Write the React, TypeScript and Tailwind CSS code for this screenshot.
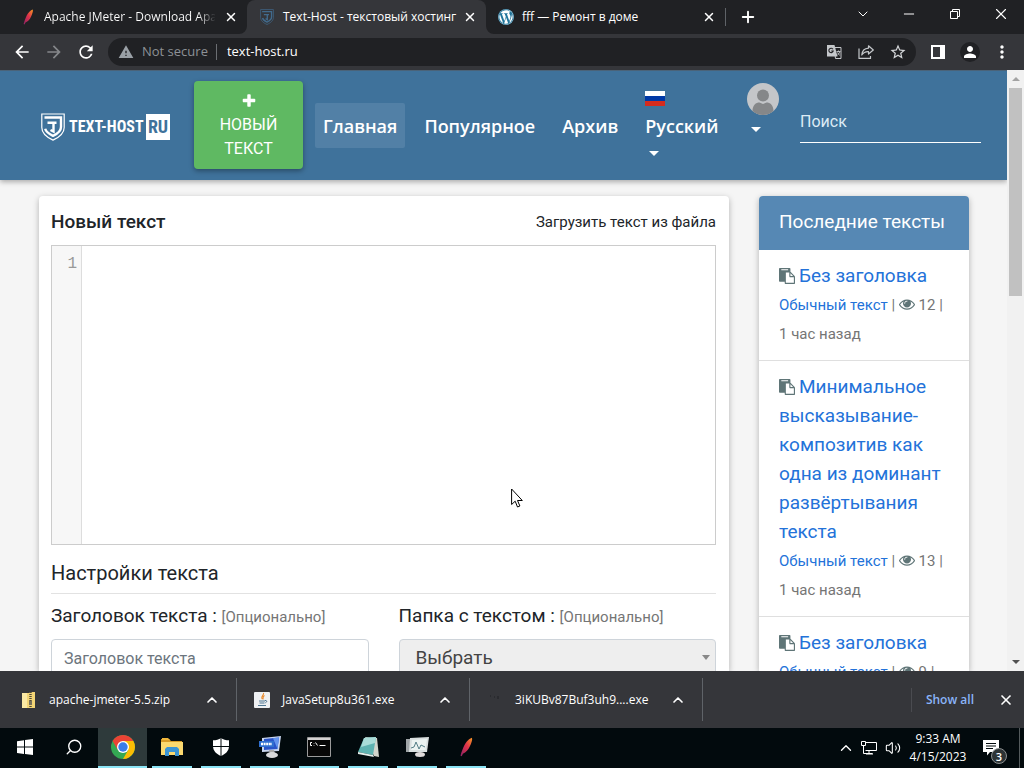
import React from "react";
import { MdArrowBack, MdArrowForward, MdRefresh, MdWarning, MdStarBorder, MdPerson, MdMoreVert } from "react-icons/md";
import { FaWordpress } from "react-icons/fa";
import { ChevronDown, ChevronUp, Plus, X, Minus, Search, Volume2 } from "lucide-react";

const uiFont = "font-['Open_Sans','Noto_Sans',sans-serif]";

function Feather({ className }: { className?: string }) {
  return (
    <svg viewBox="0 0 16 16" className={className} aria-hidden="true">
      <defs>
        <linearGradient id="feather" x1="1" y1="0" x2="0" y2="1">
          <stop offset="0" stopColor="#f69923" />
          <stop offset="0.45" stopColor="#e0324a" />
          <stop offset="1" stopColor="#8a2466" />
        </linearGradient>
      </defs>
      <path d="M12.8.5c-2.2.6-4.700 3.200-6.100 6C5.400 9.200 4.300 12 3.600 15l1 .4.9-2c2.500-.8 4.400-3.400 5.600-6 1.200-2.700 2.200-5.200 1.700-6.900z" fill="url(#feather)" />
    </svg>
  );
}

function ShieldMark({ className, color }: { className?: string; color: string }) {
  return (
    <svg viewBox="0 0 24 28" className={className} fill="none" stroke={color} aria-hidden="true">
      <path d="M.8 1h22.400v13.500c0 6-5 9.800-11.200 12.600C5.800 24.300.8 20.500.8 14.500z" strokeWidth="1.2" />
      <path d="M3.500 4.500h16.500v9.500c0 4.500-4 7-8 8.800-3.500-1.600-7-3.800-7.800-7" strokeWidth="2.4" />
      <path d="M6.500 9.800h9M12.500 9.800v8.700l-3-1.500" strokeWidth="2.4" />
    </svg>
  );
}

function Foot({ flip }: { flip?: boolean }) {
  return (
    <svg viewBox="0 0 8 8" className={flip ? "absolute -right-2 bottom-0 size-2" : "absolute -left-2 bottom-0 size-2"} aria-hidden="true">
      <path d={flip ? "M0 0a8 8 0 0 0 8 8H0z" : "M8 0a8 8 0 0 1-8 8h8z"} fill="#35363a" />
    </svg>
  );
}

function Tab({ title, icon, active, fade }: { title: string; icon: React.ReactNode; active?: boolean; fade?: boolean }) {
  return (
    <div className={active ? "relative flex w-[239px] items-center gap-2 rounded-t-lg bg-[#35363a] pr-2 pl-3" : "flex w-[239px] items-center gap-2 pr-2 pl-3"}>
      {active && <Foot />}
      {active && <Foot flip />}
      {icon}
      <span className={fade ? "min-w-0 flex-1 overflow-hidden bg-linear-to-r from-white from-90% to-[#303134] bg-clip-text text-xs whitespace-nowrap text-transparent" : "min-w-0 flex-1 text-xs whitespace-nowrap"}>
        {title}
      </span>
      <button aria-label="Close tab" className="flex size-4 items-center justify-center">
        <X className="size-3.5" strokeWidth={2.5} />
      </button>
    </div>
  );
}

function Browser() {
  return (
    <header className={`${uiFont} shrink-0 text-white`}>
      <div className="flex h-[34px] bg-[#202124] pl-2">
        <Tab title="Apache JMeter - Download Apache JMeter" fade icon={<Feather className="size-4 shrink-0" />} />
        <Tab title="Text-Host - текстовый хостинг" active icon={<ShieldMark className="size-4 shrink-0" color="#416a8c" />} />
        <Tab
          title="fff — Ремонт в доме"
          icon={<FaWordpress className="size-4 shrink-0 rounded-full bg-[#21759b] text-white" />}
        />
        <div className="my-2 w-px bg-[#5f6368]" />
        <button aria-label="New tab" className="flex w-11 items-center justify-center">
          <Plus className="size-[18px]" strokeWidth={2.5} />
        </button>
        <div className="ml-auto flex h-7">
          <button aria-label="Search tabs" className="flex w-[46px] items-center justify-center"><ChevronDown className="size-4" strokeWidth={1.5} /></button>
          <button aria-label="Minimize" className="flex w-[46px] items-center justify-center"><Minus className="size-4" strokeWidth={1.5} /></button>
          <button aria-label="Restore" className="flex w-[46px] items-center justify-center">
            <svg viewBox="0 0 10 10" className="size-2.5" fill="none" stroke="#fff" aria-hidden="true">
              <path d="M.5 2.500h7v7h-7zM2.500 2.500v-2h7v7h-2" />
            </svg>
          </button>
          <button aria-label="Close" className="flex w-[46px] items-center justify-center"><X className="size-[18px]" strokeWidth={1.5} /></button>
        </div>
      </div>
      <div className="flex h-9 items-center bg-[#35363a] px-1.5">
        <div className="flex">
          <button aria-label="Back" className="flex w-8 justify-center"><MdArrowBack className="size-5" /></button>
          <button aria-label="Forward" className="flex w-8 justify-center text-[#85878a]"><MdArrowForward className="size-5" /></button>
          <button aria-label="Reload" className="flex w-8 justify-center"><MdRefresh className="size-5" /></button>
        </div>
        <div className="ml-1.5 flex h-7 flex-1 items-center rounded-full bg-[#202124] pr-0.5 pl-2.5 text-[13px]">
          <MdWarning className="size-4 text-[#9aa0a6]" />
          <span className="ml-2 text-[#8d9196]">Not secure</span>
          <span className="mr-2.5 ml-2 h-4 w-px bg-[#6b6e72]" />
          <span className="flex-1">text-host.ru</span>
          <button aria-label="Translate this page" className="flex w-8 justify-center text-[#c4c7ca]">
            <svg viewBox="0 0 16 16" className="size-4" aria-hidden="true">
              <path d="M8 3.500h7v11H9.500z" fill="none" stroke="currentColor" />
              <path d="M1 1h7.500l3 11.500H1z" fill="currentColor" />
              <path d="M7 5.300A2.200 2.200 0 1 0 7.200 7H5.200" fill="none" stroke="#202124" strokeWidth="1.1" />
              <path d="M10.500 7.500h4M12.500 6.500v1M13.800 7.500c-.5 1.500-1.200 2.800-2.300 3.800M11.500 8.500c.7 1.200 1.200 2 2.300 2.800" fill="none" stroke="currentColor" strokeWidth=".9" />
            </svg>
          </button>
          <button aria-label="Share this page" className="flex w-8 justify-center text-[#c4c7ca]">
            <svg viewBox="0 0 16 16" className="size-4" fill="none" stroke="currentColor" strokeWidth="1.2" strokeLinejoin="round" aria-hidden="true">
              <path d="M1 4.500v9.900h11.500V12" />
              <path d="M10.500 1.800 15.300 6l-4.800 4V7.700C7.500 7.500 5.500 8.500 3.800 11c.3-4 2.700-6.600 6.700-6.900z" />
            </svg>
          </button>
          <button aria-label="Bookmark this tab" className="flex w-8 justify-center text-[#d5d7da]"><MdStarBorder className="size-[18px]" /></button>
        </div>
        <div className="flex items-center pl-1.5">
          <button aria-label="Side panel" className="flex w-8 justify-center">
            <svg viewBox="0 0 14 14" className="size-3.5" aria-hidden="true">
              <path d="M1 1h12v12H1z" fill="none" stroke="#fff" strokeWidth="2" />
              <path d="M9 1h4v12H9z" fill="#fff" />
            </svg>
          </button>
          <button aria-label="Profile" className="flex w-8 justify-center">
            <span className="flex size-5 items-center justify-center rounded-full bg-[#202124]"><MdPerson className="size-[18px]" /></span>
          </button>
          <button aria-label="Menu" className="flex w-8 justify-center"><MdMoreVert className="size-5" /></button>
        </div>
      </div>
    </header>
  );
}

function Caret() {
  return (
    <svg viewBox="0 0 10 5" className="h-[5px] w-2.5" aria-hidden="true">
      <path d="M0 0h10L5 5z" fill="currentColor" />
    </svg>
  );
}

function SiteHeader() {
  return (
    <header className="relative z-10 flex h-[110px] shrink-0 items-center bg-[#3f729b] pr-[26px] pl-[41px] text-white shadow-[0_2px_5px_rgba(0,0,0,0.3),inset_0_1px_0_#4a6379]">
      <a href="#home" aria-label="TEXT-HOST.RU" className="flex w-[129px] items-center gap-1 pt-1">
        <ShieldMark className="h-7 w-6 shrink-0" color="#fff" />
        <span className="flex flex-1 items-center justify-between font-['Roboto_Condensed','Liberation_Sans_Narrow','Roboto',sans-serif] text-base leading-none font-bold whitespace-nowrap">
          <span>TEXT-HOST</span>
          <span className="flex h-[26px] w-6 items-center justify-center bg-white text-lg leading-none text-[#3f729b]">RU</span>
        </span>
      </a>
      <a href="#new" className="ml-6 flex h-[88px] w-[109px] flex-col items-center rounded-sm bg-[#5fb962] pt-2 text-center text-base leading-6 shadow-[0_2px_5px_rgba(0,0,0,0.35)]">
        <svg viewBox="0 0 1792 1792" className="my-1 size-4" fill="currentColor" aria-hidden="true">
          <path d="M1600 736v192q0 40-28 68t-68 28h-416v416q0 40-28 68t-68 28h-192q-40 0-68-28t-28-68v-416h-416q-40 0-68-28t-28-68v-192q0-40 28-68t68-28h416v-416q0-40 28-68t68-28h192q40 0 68 28t28 68v416h416q40 0 68 28t28 68z" />
        </svg>
        <span>НОВЫЙ<br />ТЕКСТ</span>
      </a>
      <nav className="ml-3 flex items-center gap-[11px] font-['Open_Sans','Noto_Sans',sans-serif] text-lg leading-[29px] font-semibold">
        <a href="#home" className="rounded-xs bg-[#5280a6] px-2 pt-[9px] pb-[7px]">Главная</a>
        <a href="#popular" className="px-2 pt-[9px] pb-[7px]">Популярное</a>
        <a href="#archive" className="px-2 pt-[9px] pb-[7px]">Архив</a>
        <button className="flex flex-col items-start px-2 pb-1 text-left">
          <svg viewBox="0 0 20 15" className="mb-1.5 h-[15px] w-5" aria-hidden="true">
            <path d="M0 0h20v5H0z" fill="#fff" />
            <path d="M0 5h20v5H0z" fill="#0039a6" />
            <path d="M0 10h20v5H0z" fill="#d52b1e" />
          </svg>
          <span>Русский</span>
          <span className="mt-2.5 ml-1 flex"><Caret /></span>
        </button>
      </nav>
      <button aria-label="Аккаунт" className="ml-5 flex flex-col items-start gap-3 pb-9">
        <svg viewBox="0 0 32 32" className="size-8" aria-hidden="true">
          <circle cx="16" cy="16" r="16" fill="#c4c6c9" />
          <circle cx="16" cy="12.5" r="6" fill="#858789" />
          <path d="M5.500 28c0-6 3.500-8.500 7-8.500l3.500 1.500 3.500-1.500c3.500 0 7 2.500 7 8.500a16 16 0 0 1-21 0z" fill="#858789" />
        </svg>
        <span className="ml-1 flex"><Caret /></span>
      </button>
      <input
        type="search"
        aria-label="Поиск"
        placeholder="Поиск"
        className="ml-auto h-9 w-[181px] rounded-none border-b border-white bg-transparent pb-1.5 text-base outline-none placeholder:text-[#dcebf5]"
      />
    </header>
  );
}

function Field({ id, label, children }: { id: string; label: string; children: React.ReactNode }) {
  return (
    <div className="min-w-0 flex-1">
      <label htmlFor={id} className="mb-2 block text-[19px] leading-7 whitespace-nowrap">
        {label} : <span className="text-[15px] text-[#757575]">[Опционально]</span>
      </label>
      {children}
    </div>
  );
}

function Editor() {
  return (
    <main className="min-w-0 flex-1 rounded-t-sm bg-white pt-3 pr-[13px] pl-3 shadow-[0_2px_6px_rgba(0,0,0,0.28)]">
      <div className="mb-2 flex h-[29px] items-center justify-between">
        <h1 className="text-[19px] font-medium">Новый текст</h1>
        <a href="#upload" className="text-[15px]">Загрузить текст из файла</a>
      </div>
      <div className="flex h-[300px] border border-[#ccc]">
        <div className="w-[30px] border-r border-[#ddd] bg-[#f7f7f7] pt-1 pr-1 text-right font-['Liberation_Mono',monospace] text-base leading-7 text-[#999]">1</div>
        <textarea aria-label="Новый текст" className="min-w-0 flex-1 resize-none p-1 font-['Liberation_Mono',monospace] outline-none" />
      </div>
      <h2 className="mt-3.5 text-xl leading-7">Настройки текста</h2>
      <hr className="mt-1.5 mb-2 border-[#e2e2e2]" />
      <div className="flex gap-[30px]">
        <Field id="title" label="Заголовок текста">
          <input id="title" placeholder="Заголовок текста" className="h-[38px] w-full rounded-sm border border-[#ced4da] px-3 text-base outline-none placeholder:text-[#6c757d]" />
        </Field>
        <Field id="folder" label="Папка с текстом">
          <div className="relative">
            <select id="folder" className="h-[38px] w-full appearance-none rounded-sm border border-[#ced4da] bg-[#eee] px-4 text-[19px] text-[#444]">
              <option>Выбрать</option>
            </select>
            <svg viewBox="0 0 8 5" className="pointer-events-none absolute top-4 right-1.5 h-[5px] w-2" aria-hidden="true">
              <path d="M0 0h8L4 5z" fill="#888" />
            </svg>
          </div>
        </Field>
      </div>
    </main>
  );
}

const recent = [
  { title: "Без заголовка", views: 12 },
  { title: "Минимальное высказывание-композитив как одна из доминант развёртывания текста", views: 13 },
  { title: "Без заголовка", views: 9 },
];

function Recent() {
  return (
    <aside className="w-[210px] shrink-0 rounded-t-sm bg-white shadow-[0_2px_6px_rgba(0,0,0,0.28)]">
      <h2 className="flex h-[54px] items-center rounded-t-sm bg-[#5688b4] px-5 pb-0.5 text-[19px] text-white">Последние тексты</h2>
      <ul>
        {recent.map((item) => (
          <li key={item.views} className="border-b border-[#dfdfdf] px-5 py-[11px] leading-[29px]">
            <a href="#text" className="block text-[19px] text-[#2372d9]">
              <svg viewBox="0 0 1792 1792" className="mr-1 mb-0.5 inline size-4 text-[#5f7577]" fill="currentColor" aria-hidden="true">
                <path d="M768 1664h896v-640h-416q-40 0-68-28t-28-68v-416h-384v1152zm256-1440v-64q0-13-9.5-22.500t-22.500-9.500h-704q-13 0-22.500 9.500t-9.500 22.500v64q0 13 9.500 22.500t22.500 9.500h704q13 0 22.500-9.500t9.500-22.500zm256 672h299l-299-299v299zm512 128v672q0 40-28 68t-68 28h-960q-40 0-68-28t-28-68v-160h-544q-40 0-68-28t-28-68v-1344q0-40 28-68t68-28h1088q40 0 68 28t28 68v328q21 13 36 28l408 408q28 28 48 76t20 88z" />
              </svg>
              {item.title}
            </a>
            <p className="pt-px text-[15px] text-[#757575]">
              <a href="#plain" className="text-[#2372d9]">Обычный текст</a> |{" "}
              <svg viewBox="0 0 1792 1792" className="mb-1 inline size-4 text-[#5f7577]" fill="currentColor" aria-hidden="true">
                <path d="M1664 960q-152-236-381-353 61 104 61 225 0 185-131.500 316.500t-316.500 131.500-316.500-131.500-131.500-316.500q0-121 61-225-229 117-381 353 133 205 333.500 326.500t434.500 121.500 434.500-121.500 333.500-326.500zm-720-384q0-20-14-34t-34-14q-125 0-214.500 89.500t-89.500 214.500q0 20 14 34t34 14 34-14 14-34q0-86 61-147t147-61q20 0 34-14t14-34zm848 384q0 34-20 69-140 230-376.500 368.500t-499.500 138.500-499.500-139-376.500-368q-20-35-20-69t20-69q140-229 376.500-368t499.500-139 499.500 139 376.500 368q20 35 20 69z" />
              </svg>{" "}
              {item.views} | <br />1 час назад
            </p>
          </li>
        ))}
      </ul>
    </aside>
  );
}

function Scrollbar() {
  return (
    <div className="flex w-[17px] shrink-0 flex-col items-center bg-[#f1f1f1]" aria-hidden="true">
      <svg viewBox="0 0 8 4" className="my-[7px] h-1 w-2"><path d="M0 4h8L4 0z" fill="#a3a3a3" /></svg>
      <div className="h-[208px] w-[13px] bg-[#c1c1c1]" />
      <svg viewBox="0 0 8 4" className="mt-auto mb-[7px] h-1 w-2"><path d="M0 0h8L4 4z" fill="#505050" /></svg>
    </div>
  );
}

function Download({ name, icon }: { name: string; icon: React.ReactNode }) {
  return (
    <div className="my-[7px] flex w-[233px] items-center border-r border-[#5f6368] pr-4 pl-[17px] text-xs">
      <span className="mr-3 flex size-4 shrink-0 items-center justify-center">{icon}</span>
      <button className="flex-1 text-left whitespace-nowrap">{name}</button>
      <button aria-label="Download options"><ChevronUp className="size-4" strokeWidth={2.5} /></button>
    </div>
  );
}

function Downloads() {
  return (
    <section aria-label="Downloads" className={`${uiFont} flex h-[57px] shrink-0 bg-[#35363a] pl-1 text-white`}>
      <Download
        name="apache-jmeter-5.5.zip"
        icon={
          <svg viewBox="0 0 16 16" className="size-4" aria-hidden="true">
            <path d="M1 1h7l1-1h5v16H1z" fill="#f2d475" />
            <path d="M1 1h5v15H1z" fill="#fbe9a4" />
            <path d="M9.500 0v16" stroke="#4f4937" strokeWidth="2.4" strokeDasharray="1 1" />
            <path d="M8 9h3v4H8z" fill="#77705a" />
          </svg>
        }
      />
      <Download
        name="JavaSetup8u361.exe"
        icon={
          <svg viewBox="0 0 16 16" className="size-4" aria-hidden="true">
            <rect width="16" height="16" rx="1" fill="#eef0f2" />
            <path d="M9.500 1c1 2-3 3-1.500 6M10.500 3.500C8 5 9.800 5.500 8.800 7.500" stroke="#e8892b" fill="none" strokeWidth="1.1" />
            <path d="M5 9h6M5.500 11h5M4 13.500h8M11 8.500c2.500-.5 2 2 .3 2.300" stroke="#4d7590" fill="none" />
          </svg>
        }
      />
      <Download
        name="3iKUBv87Buf3uh9....exe"
        icon={<svg viewBox="0 0 16 16" className="size-4" aria-hidden="true"><path d="M3 4h1M7 5h1M11 4v3" stroke="#202124" /></svg>}
      />
      <div className="ml-auto flex items-center">
        <span className="h-6 w-px bg-[#4a4b50]" />
        <button className="px-3.5 text-xs font-semibold text-[#8ab4f8]">Show all</button>
        <button aria-label="Close downloads bar" className="mr-2.5 ml-2.5"><X className="size-4" strokeWidth={2.5} /></button>
      </div>
    </section>
  );
}

function Tile({ label, active, running, children }: { label: string; active?: boolean; running?: boolean; children: React.ReactNode }) {
  return (
    <button aria-label={label} className={active ? "flex w-[49px] flex-col items-center bg-[#2e3a3b]" : "flex w-[49px] flex-col items-center"}>
      <span className="flex h-[38px] items-center">{children}</span>
      {(active || running) && <span className={active ? "h-0.5 w-full bg-[#8be4f5]" : "h-0.5 w-10 bg-[#8be4f5]"} />}
    </button>
  );
}

function Taskbar() {
  return (
    <footer className={`${uiFont} flex h-10 shrink-0 bg-[#020a0d] text-xs text-white`}>
      <Tile label="Start">
        <svg viewBox="0 0 16 16" className="size-4" fill="#fff" aria-hidden="true"><path d="M0 2.200 7 1.200v6.400H0zM8 1l8-1v7.600H8zM0 8.500h7v6.400l-7-1zM8 8.500h8V16l-8-1z" /></svg>
      </Tile>
      <Tile label="Search"><Search className="size-[18px] -scale-x-100" strokeWidth={1.8} /></Tile>
      <Tile label="Google Chrome" active>
        <svg viewBox="0 0 24 24" className="size-6" aria-hidden="true">
          <circle cx="12" cy="12" r="12" fill="#34a853" />
          <path d="M1.610 6A12 12 0 0 1 22.390 6H12L6.800 15z" fill="#ea4335" />
          <path d="M22.390 6A12 12 0 0 1 12 24l5.200-9L12 6z" fill="#fbbc04" />
          <circle cx="12" cy="12" r="6" fill="#fff" />
          <circle cx="12" cy="12" r="4.7" fill="#3b7de9" />
        </svg>
      </Tile>
      <Tile label="File Explorer" running>
        <svg viewBox="0 0 22 20" className="h-5 w-[22px]" aria-hidden="true">
          <path d="M0 2h8l2 2h11v14H0z" fill="#d79b27" />
          <path d="M1 1h6l2 2H1z" fill="#f1b83c" />
          <path d="M0 5h22v13H0z" fill="#fbd96f" />
          <path d="M4 19v-7l2-2h10l2 2v7h-4v-4H8v4z" fill="#3c95d4" />
        </svg>
      </Tile>
      <Tile label="Windows Security" running>
        <svg viewBox="0 0 16 18" className="h-[18px] w-4" aria-hidden="true">
          <path d="M8 0c2 1.600 5 2.300 8 2.300V8c0 5-3.500 8-8 10C3.500 16 0 13 0 8V2.300C3 2.300 6 1.600 8 0z" fill="#fff" />
          <path d="M8 0v18M0 8.500h16" stroke="#020a0d" />
        </svg>
      </Tile>
      <Tile label="Remote installer" running>
        <svg viewBox="0 0 24 24" className="size-6" aria-hidden="true">
          <path d="m4 3 19-2-2 15-17 1z" fill="#c9d6ef" />
          <path d="m6 4 15-1.500L19.500 14 6 15z" fill="#2a54c8" />
          <path d="m15 3.200 6-.7L19.500 14z" fill="#6494ed" />
          <path d="M1 6h15v6H1z" fill="#2f6fd0" />
          <path d="M3 9h11" stroke="#fff" strokeWidth="2.5" strokeDasharray="2 .6" />
          <path d="M11 15h5l1 4h-5z" fill="#aaa" />
          <ellipse cx="14" cy="20" rx="6" ry="3" fill="#d9dadc" />
        </svg>
      </Tile>
      <Tile label="Command Prompt" running>
        <svg viewBox="0 0 24 20" className="h-5 w-6" aria-hidden="true">
          <path d="M.5.500h23v19H.5z" fill="#070707" stroke="#9b9b9b" />
          <path d="M1 1h22v2H1z" fill="#d3d3d3" />
          <path d="M5 5.500H3.500v3H5M7 6v.5M7 8v.5M8.500 5.500l2 3M12.500 8.500h6" stroke="#fff" fill="none" />
        </svg>
      </Tile>
      <Tile label="Notepad" running>
        <svg viewBox="0 0 24 24" className="size-6" aria-hidden="true">
          <path d="m9 2 12 1 2 19-5-1z" fill="#d2d5cc" />
          <path d="M8 3 20 2l-3 18-15-3z" fill="#5fb3b1" />
          <path d="M8 3 20 2l-1 6L5 12z" fill="#a9dcd8" />
          <path d="m2 17 15 3 1 2-16-3z" fill="#e5f0ed" />
        </svg>
      </Tile>
      <Tile label="Resource Monitor" running>
        <svg viewBox="0 0 24 24" className="size-6" aria-hidden="true">
          <path d="M1 4h14v13H1z" fill="#9fa5a7" />
          <path d="m5 3 19-1-2 15H4z" fill="#d9dfdf" />
          <path d="m7 5 15-1-1.500 11H6z" fill="#ecf4f2" />
          <path d="m6 13 3-1 2-5 3 7 2-4 4 2" fill="none" stroke="#557f87" />
          <ellipse cx="15" cy="19.5" rx="5" ry="2.5" fill="#dedada" />
        </svg>
      </Tile>
      <Tile label="Apache JMeter" running><Feather className="size-5" /></Tile>

      <div className="ml-auto flex items-center">
        <button aria-label="Show hidden icons"><ChevronUp className="size-[18px]" strokeWidth={1.8} /></button>
        <svg viewBox="0 0 16 14" className="ml-1.5 h-3.5 w-4" fill="none" stroke="#fff" aria-hidden="true">
          <path d="M4.500 1.500h11v8h-11M.5.500h4v4h-4zM2.500 4.500v8h9M8 9.500v3M5 13h7" />
        </svg>
        <Volume2 className="ml-2 size-4" strokeWidth={1.6} />
        <div className="ml-2 w-[58px] text-center leading-[18px] whitespace-nowrap">
          <div>9:33 AM</div>
          <div>4/15/2023</div>
        </div>
        <button aria-label="Notifications" className="relative mr-5 ml-4">
          <svg viewBox="0 0 16 16" className="size-4" aria-hidden="true">
            <path d="M0 0h16v12H7l-3 3.500V12H0z" fill="#fff" />
            <path d="M3 3.500h10M3 6h10M3 8.500h7" stroke="#020a0d" />
          </svg>
          <span className="absolute top-2 left-2 flex size-4 items-center justify-center rounded-full border border-[#8b8f90] bg-[#2c3335] text-[11px] leading-none font-semibold">3</span>
        </button>
        <span className="mr-1 h-10 w-px bg-[#535a5c]" />
      </div>
    </footer>
  );
}

export default function App() {
  return (
    <div className="relative flex h-screen flex-col overflow-hidden bg-[#f5f5f5] font-['Roboto',sans-serif] text-[#212529]">
      <Browser />
      <div className="flex min-h-0 flex-1">
        <div className="flex min-w-0 flex-1 flex-col overflow-hidden">
          <SiteHeader />
          <div className="flex min-h-0 flex-1 gap-[30px] pt-4 pr-[38px] pl-[39px]">
            <Editor />
            <Recent />
          </div>
        </div>
        <Scrollbar />
      </div>
      <Downloads />
      <Taskbar />
      <svg viewBox="0 0 12 20" className="pointer-events-none absolute top-[488px] left-[511px] h-5 w-3" aria-hidden="true">
        <path d="M.6 1v15.500l3.600-3.300L6.500 19l2.400-1-2.400-5.500h4.800z" fill="#fff" stroke="#000" />
      </svg>
    </div>
  );
}
